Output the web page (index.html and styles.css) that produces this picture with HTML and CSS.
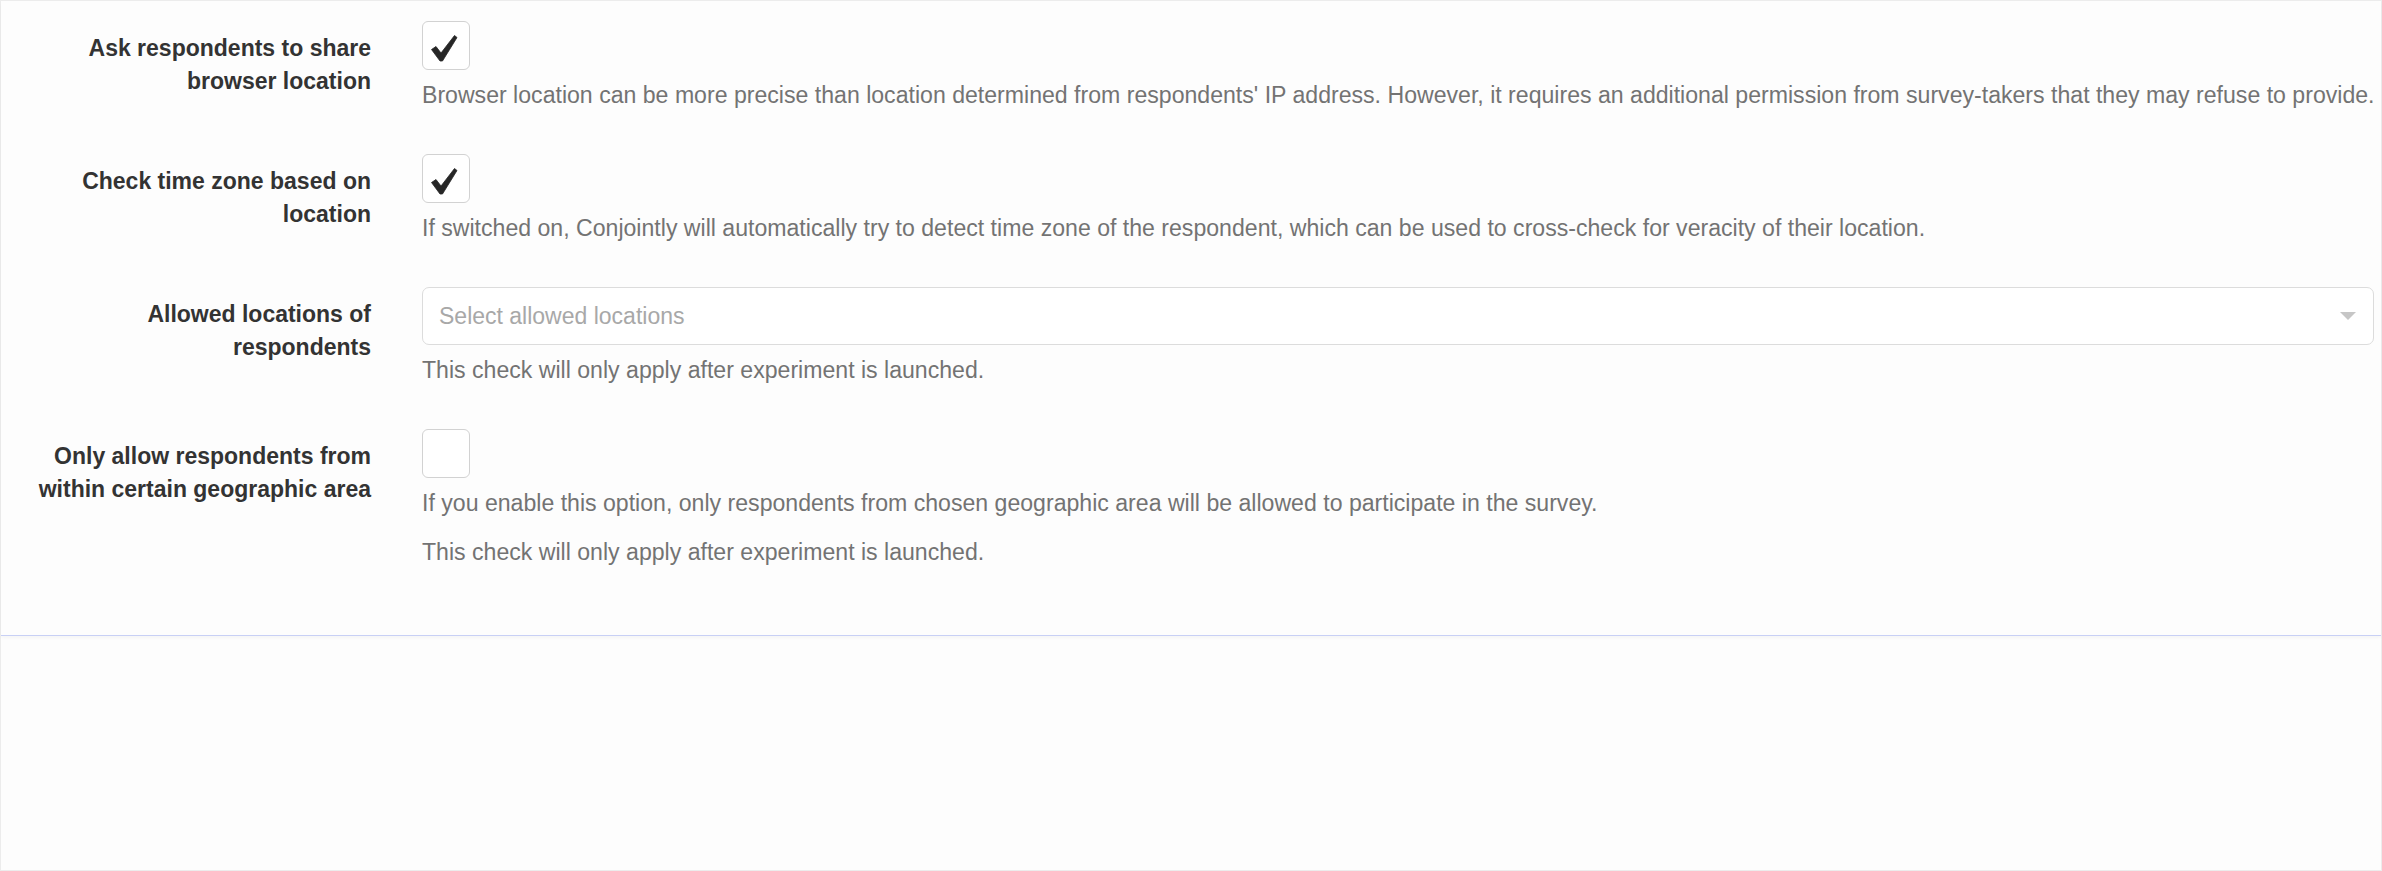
FILE: index.html
```html
<!DOCTYPE html>
<html>
<head>
    <title>Location settings</title>
    <link rel="stylesheet" href="styles.css">
</head>
<body>
    <div class="panel">
        <form class="settings">
            <!-- Browser location -->
            <div class="form-group">
                <label class="control-label">Ask respondents to share browser location</label>
                <div class="controls">
                    <span class="check">
                        <svg width="48" height="49" viewBox="0 0 48 49"><path d="M9.5 28.5 L14 25.5 L19 32 L32.5 14.5 L35 16.5 L20.5 40 L18 40 Z"/></svg>
                    </span>
                    <p class="help">Browser location can be more precise than location determined from respondents' IP address. However, it requires an additional permission from survey-takers that they may refuse to provide.</p>
                </div>
            </div>

            <!-- Time zone -->
            <div class="form-group">
                <label class="control-label">Check time zone based on location</label>
                <div class="controls">
                    <span class="check">
                        <svg width="48" height="49" viewBox="0 0 48 49"><path d="M9.5 28.5 L14 25.5 L19 32 L32.5 14.5 L35 16.5 L20.5 40 L18 40 Z"/></svg>
                    </span>
                    <p class="help">If switched on, Conjointly will automatically try to detect time zone of the respondent, which can be used to cross-check for veracity of their location.</p>
                </div>
            </div>

            <!-- Allowed locations -->
            <div class="form-group">
                <label class="control-label">Allowed locations of respondents</label>
                <div class="controls">
                    <div class="select">
                        <span class="placeholder">Select allowed locations</span>
                        <span class="arrow"></span>
                    </div>
                    <p class="help">This check will only apply after experiment is launched.</p>
                </div>
            </div>

            <!-- Geographic area -->
            <div class="form-group">
                <label class="control-label">Only allow respondents from within certain geographic area</label>
                <div class="controls">
                    <span class="check"></span>
                    <p class="help">If you enable this option, only respondents from chosen geographic area will be allowed to participate in the survey.</p>
                    <p class="help">This check will only apply after experiment is launched.</p>
                </div>
            </div>
        </form>
    </div>
</body>
</html>
```

FILE: styles.css
```css
/* General */
html, body {
    margin: 0;
    padding: 0;
    background: #fdfdfd;
}

body {
    font-family: "Liberation Sans", Arial, sans-serif;
    font-size: 23px;
    line-height: 33px;
    color: #333;
}

/* Panel */
.panel {
    box-sizing: border-box;
    height: 871px;
    border: 1px solid #ececec;
    background: #fdfdfd;
}

.settings {
    padding: 20px 7px 24px 20px;
    border-bottom: 1px solid #c8d0f5;
    box-shadow: 0 2px 3px rgba(0, 0, 0, 0.03);
}

/* Rows */
.form-group {
    display: grid;
    grid-template-columns: 350px 1fr;
    column-gap: 51px;
    margin-bottom: 42px;
}

.form-group:last-child {
    margin-bottom: 0;
    padding-bottom: 42px;
}

.control-label {
    padding-top: 11px;
    text-align: right;
    font-weight: bold;
    color: #333;
}

.controls {
    min-width: 0;
}

/* Checkbox */
.check {
    display: block;
    box-sizing: border-box;
    width: 48px;
    height: 49px;
    border: 1px solid #d2d2d2;
    border-radius: 6px;
    background: #fff;
}

.check svg {
    display: block;
    margin: -1px;
}

.check path {
    fill: #262626;
    stroke: #262626;
    stroke-width: 0.8;
    stroke-linejoin: round;
}

/* Select */
.select {
    display: flex;
    align-items: center;
    justify-content: space-between;
    box-sizing: border-box;
    height: 58px;
    padding: 0 17px 0 16px;
    border: 1px solid #dcdcdc;
    border-radius: 7px;
    background: #fff;
}

.placeholder {
    color: #a8a8a8;
}

.arrow {
    width: 0;
    height: 0;
    border-left: 8px solid transparent;
    border-right: 8px solid transparent;
    border-top: 8px solid #c6c6c6;
}

/* Help text */
.help {
    margin: 9px 0 0;
    font-size: 23.1px;
    color: #737373;
    white-space: nowrap;
}

.help + .help {
    margin-top: 16px;
}
```
